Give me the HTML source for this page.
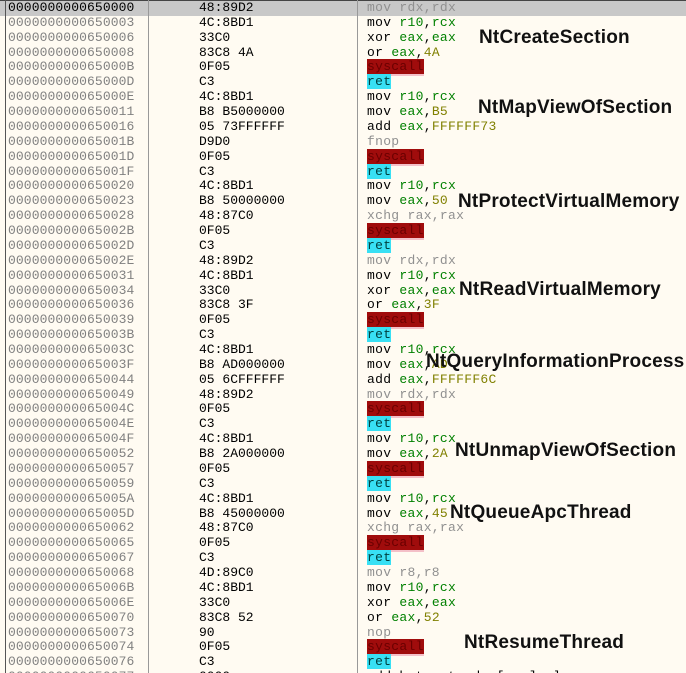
<!DOCTYPE html>
<html style="width:686px;height:673px;overflow:hidden"><head><meta charset="utf-8"><style>
*{margin:0;padding:0}
body{width:686px;height:673px;overflow:hidden;background:#fffbf2;position:relative;font-family:"Liberation Mono",monospace;font-size:13px;}
.r{position:absolute;left:0;width:686px;height:14.87px;line-height:14.87px;white-space:pre}
.a{position:absolute;left:8px;color:#808080;letter-spacing:0.1px}
.b{position:absolute;left:199px;color:#000}
.i{position:absolute;left:367px;color:#000;letter-spacing:0.3px}
.g{color:#008000}.o{color:#808000}.x{color:#909090}
.s{background:#a00c0c;color:#6a0000;box-shadow:0 2px 0 #f4c0c8}
.t{background:#38e0f4;color:#004040}
.hl{background:#c8c8c8}
.vl{position:absolute;top:0;height:673px;width:1px;background:#555}
.lab{position:absolute;font-family:"Liberation Sans",sans-serif;font-weight:bold;font-size:19px;letter-spacing:0.2px;color:#111;line-height:20px;white-space:nowrap}
</style></head><body>
<div class="r hl" style="top:1px"></div>
<div style="position:absolute;top:0;left:0;width:686px;height:1px;background:#444"></div>
<div class="vl" style="left:5px"></div>
<div class="vl" style="left:148px;background:#999"></div>
<div class="vl" style="left:357px;background:#999"></div>

<div class="r" style="top:1px"><span class="a" style="color:#000">0000000000650000</span><span class="b">48:89D2</span><span class="i x">mov rdx,rdx</span></div>
<div class="r" style="top:15.87px"><span class="a">0000000000650003</span><span class="b">4C:8BD1</span><span class="i">mov <span class="g">r10</span>,<span class="g">rcx</span></span></div>
<div class="r" style="top:30.74px"><span class="a">0000000000650006</span><span class="b">33C0</span><span class="i">xor <span class="g">eax</span>,<span class="g">eax</span></span></div>
<div class="r" style="top:45.61px"><span class="a">0000000000650008</span><span class="b">83C8 4A</span><span class="i">or <span class="g">eax</span>,<span class="o">4A</span></span></div>
<div class="r" style="top:60.48px"><span class="a">000000000065000B</span><span class="b">0F05</span><span class="i"><span class="s">syscall</span></span></div>
<div class="r" style="top:75.35px"><span class="a">000000000065000D</span><span class="b">C3</span><span class="i"><span class="t">ret</span></span></div>
<div class="r" style="top:90.22px"><span class="a">000000000065000E</span><span class="b">4C:8BD1</span><span class="i">mov <span class="g">r10</span>,<span class="g">rcx</span></span></div>
<div class="r" style="top:105.09px"><span class="a">0000000000650011</span><span class="b">B8 B5000000</span><span class="i">mov <span class="g">eax</span>,<span class="o">B5</span></span></div>
<div class="r" style="top:119.96px"><span class="a">0000000000650016</span><span class="b">05 73FFFFFF</span><span class="i">add <span class="g">eax</span>,<span class="o">FFFFFF73</span></span></div>
<div class="r" style="top:134.83px"><span class="a">000000000065001B</span><span class="b">D9D0</span><span class="i x">fnop</span></div>
<div class="r" style="top:149.7px"><span class="a">000000000065001D</span><span class="b">0F05</span><span class="i"><span class="s">syscall</span></span></div>
<div class="r" style="top:164.57px"><span class="a">000000000065001F</span><span class="b">C3</span><span class="i"><span class="t">ret</span></span></div>
<div class="r" style="top:179.44px"><span class="a">0000000000650020</span><span class="b">4C:8BD1</span><span class="i">mov <span class="g">r10</span>,<span class="g">rcx</span></span></div>
<div class="r" style="top:194.31px"><span class="a">0000000000650023</span><span class="b">B8 50000000</span><span class="i">mov <span class="g">eax</span>,<span class="o">50</span></span></div>
<div class="r" style="top:209.18px"><span class="a">0000000000650028</span><span class="b">48:87C0</span><span class="i x">xchg rax,rax</span></div>
<div class="r" style="top:224.05px"><span class="a">000000000065002B</span><span class="b">0F05</span><span class="i"><span class="s">syscall</span></span></div>
<div class="r" style="top:238.92px"><span class="a">000000000065002D</span><span class="b">C3</span><span class="i"><span class="t">ret</span></span></div>
<div class="r" style="top:253.79px"><span class="a">000000000065002E</span><span class="b">48:89D2</span><span class="i x">mov rdx,rdx</span></div>
<div class="r" style="top:268.66px"><span class="a">0000000000650031</span><span class="b">4C:8BD1</span><span class="i">mov <span class="g">r10</span>,<span class="g">rcx</span></span></div>
<div class="r" style="top:283.53px"><span class="a">0000000000650034</span><span class="b">33C0</span><span class="i">xor <span class="g">eax</span>,<span class="g">eax</span></span></div>
<div class="r" style="top:298.4px"><span class="a">0000000000650036</span><span class="b">83C8 3F</span><span class="i">or <span class="g">eax</span>,<span class="o">3F</span></span></div>
<div class="r" style="top:313.27px"><span class="a">0000000000650039</span><span class="b">0F05</span><span class="i"><span class="s">syscall</span></span></div>
<div class="r" style="top:328.14px"><span class="a">000000000065003B</span><span class="b">C3</span><span class="i"><span class="t">ret</span></span></div>
<div class="r" style="top:343.01px"><span class="a">000000000065003C</span><span class="b">4C:8BD1</span><span class="i">mov <span class="g">r10</span>,<span class="g">rcx</span></span></div>
<div class="r" style="top:357.88px"><span class="a">000000000065003F</span><span class="b">B8 AD000000</span><span class="i">mov <span class="g">eax</span>,<span class="o">AD</span></span></div>
<div class="r" style="top:372.75px"><span class="a">0000000000650044</span><span class="b">05 6CFFFFFF</span><span class="i">add <span class="g">eax</span>,<span class="o">FFFFFF6C</span></span></div>
<div class="r" style="top:387.62px"><span class="a">0000000000650049</span><span class="b">48:89D2</span><span class="i x">mov rdx,rdx</span></div>
<div class="r" style="top:402.49px"><span class="a">000000000065004C</span><span class="b">0F05</span><span class="i"><span class="s">syscall</span></span></div>
<div class="r" style="top:417.36px"><span class="a">000000000065004E</span><span class="b">C3</span><span class="i"><span class="t">ret</span></span></div>
<div class="r" style="top:432.23px"><span class="a">000000000065004F</span><span class="b">4C:8BD1</span><span class="i">mov <span class="g">r10</span>,<span class="g">rcx</span></span></div>
<div class="r" style="top:447.1px"><span class="a">0000000000650052</span><span class="b">B8 2A000000</span><span class="i">mov <span class="g">eax</span>,<span class="o">2A</span></span></div>
<div class="r" style="top:461.97px"><span class="a">0000000000650057</span><span class="b">0F05</span><span class="i"><span class="s">syscall</span></span></div>
<div class="r" style="top:476.84px"><span class="a">0000000000650059</span><span class="b">C3</span><span class="i"><span class="t">ret</span></span></div>
<div class="r" style="top:491.71px"><span class="a">000000000065005A</span><span class="b">4C:8BD1</span><span class="i">mov <span class="g">r10</span>,<span class="g">rcx</span></span></div>
<div class="r" style="top:506.58px"><span class="a">000000000065005D</span><span class="b">B8 45000000</span><span class="i">mov <span class="g">eax</span>,<span class="o">45</span></span></div>
<div class="r" style="top:521.45px"><span class="a">0000000000650062</span><span class="b">48:87C0</span><span class="i x">xchg rax,rax</span></div>
<div class="r" style="top:536.32px"><span class="a">0000000000650065</span><span class="b">0F05</span><span class="i"><span class="s">syscall</span></span></div>
<div class="r" style="top:551.19px"><span class="a">0000000000650067</span><span class="b">C3</span><span class="i"><span class="t">ret</span></span></div>
<div class="r" style="top:566.06px"><span class="a">0000000000650068</span><span class="b">4D:89C0</span><span class="i x">mov r8,r8</span></div>
<div class="r" style="top:580.93px"><span class="a">000000000065006B</span><span class="b">4C:8BD1</span><span class="i">mov <span class="g">r10</span>,<span class="g">rcx</span></span></div>
<div class="r" style="top:595.8px"><span class="a">000000000065006E</span><span class="b">33C0</span><span class="i">xor <span class="g">eax</span>,<span class="g">eax</span></span></div>
<div class="r" style="top:610.67px"><span class="a">0000000000650070</span><span class="b">83C8 52</span><span class="i">or <span class="g">eax</span>,<span class="o">52</span></span></div>
<div class="r" style="top:625.54px"><span class="a">0000000000650073</span><span class="b">90</span><span class="i x">nop</span></div>
<div class="r" style="top:640.41px"><span class="a">0000000000650074</span><span class="b">0F05</span><span class="i"><span class="s">syscall</span></span></div>
<div class="r" style="top:655.28px"><span class="a">0000000000650076</span><span class="b">C3</span><span class="i"><span class="t">ret</span></span></div>
<div class="r" style="top:670.15px"><span class="a">0000000000650077</span><span class="b">0000</span><span class="i">add byte ptr ds:[rax],al</span></div>

<div class="lab" style="left:479px;top:28px">NtCreateSection</div>
<div class="lab" style="left:478px;top:98px">NtMapViewOfSection</div>
<div class="lab" style="left:458px;top:192px">NtProtectVirtualMemory</div>
<div class="lab" style="left:459px;top:280px">NtReadVirtualMemory</div>
<div class="lab" style="left:426px;top:352px">NtQueryInformationProcess</div>
<div class="lab" style="left:455px;top:441px">NtUnmapViewOfSection</div>
<div class="lab" style="left:450px;top:503px">NtQueueApcThread</div>
<div class="lab" style="left:464px;top:633px">NtResumeThread</div>
</body></html>
